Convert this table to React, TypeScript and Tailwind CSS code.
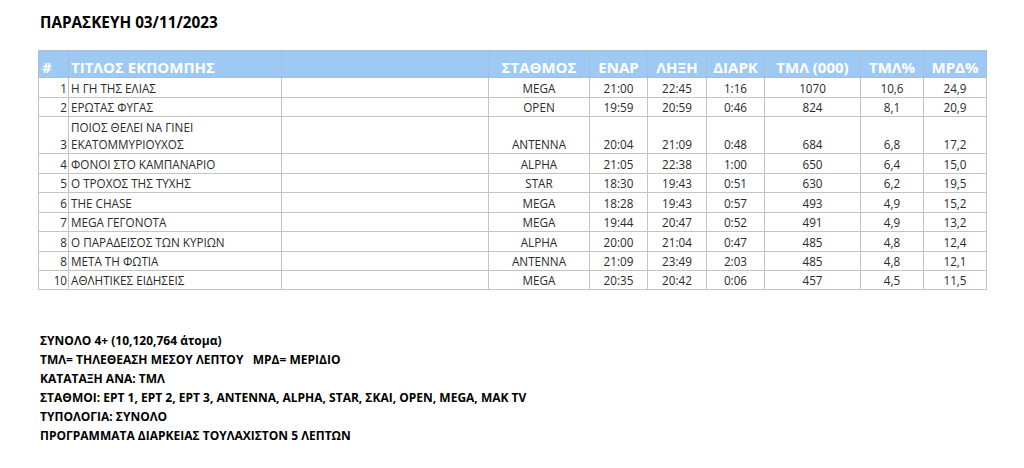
import React from "react";

const rows: [string, string, string, string, string, string, string, string, string][] = [
  ["1", "Η ΓΗ ΤΗΣ ΕΛΙΑΣ", "MEGA", "21:00", "22:45", "1:16", "1070", "10,6", "24,9"],
  ["2", "ΕΡΩΤΑΣ ΦΥΓΑΣ", "OPEN", "19:59", "20:59", "0:46", "824", "8,1", "20,9"],
  ["3", "ΠΟΙΟΣ ΘΕΛΕΙ ΝΑ ΓΙΝΕΙ ΕΚΑΤΟΜΜΥΡΙΟΥΧΟΣ", "ANTENNA", "20:04", "21:09", "0:48", "684", "6,8", "17,2"],
  ["4", "ΦΟΝΟΙ ΣΤΟ ΚΑΜΠΑΝΑΡΙΟ", "ALPHA", "21:05", "22:38", "1:00", "650", "6,4", "15,0"],
  ["5", "Ο ΤΡΟΧΟΣ ΤΗΣ ΤΥΧΗΣ", "STAR", "18:30", "19:43", "0:51", "630", "6,2", "19,5"],
  ["6", "THE CHASE", "MEGA", "18:28", "19:43", "0:57", "493", "4,9", "15,2"],
  ["7", "MEGA ΓΕΓΟΝΟΤΑ", "MEGA", "19:44", "20:47", "0:52", "491", "4,9", "13,2"],
  ["8", "Ο ΠΑΡΑΔΕΙΣΟΣ ΤΩΝ ΚΥΡΙΩΝ", "ALPHA", "20:00", "21:04", "0:47", "485", "4,8", "12,4"],
  ["8", "ΜΕΤΑ ΤΗ ΦΩΤΙΑ", "ANTENNA", "21:09", "23:49", "2:03", "485", "4,8", "12,1"],
  ["10", "ΑΘΛΗΤΙΚΕΣ ΕΙΔΗΣΕΙΣ", "MEGA", "20:35", "20:42", "0:06", "457", "4,5", "11,5"],
];

const heights = [20, 19, 37, 20, 19, 20, 19, 20, 19, 19];

const footer = [
  "ΣΥΝΟΛΟ 4+ (10,120,764 άτομα)",
  "ΤΜΛ= ΤΗΛΕΘΕΑΣΗ ΜΕΣΟΥ ΛΕΠΤΟΥ\u00a0\u00a0\u00a0ΜΡΔ= ΜΕΡΙΔΙΟ",
  "ΚΑΤΑΤΑΞΗ ΑΝΑ: ΤΜΛ",
  "ΣΤΑΘΜΟΙ: ΕΡΤ 1, ΕΡΤ 2, ΕΡΤ 3, ANTENNA, ALPHA, STAR, ΣΚΑΙ, OPEN, MEGA, ΜΑΚ TV",
  "ΤΥΠΟΛΟΓΙΑ: ΣΥΝΟΛΟ",
  "ΠΡΟΓΡΑΜΜΑΤΑ ΔΙΑΡΚΕΙΑΣ ΤΟΥΛΑΧΙΣΤΟΝ 5 ΛΕΠΤΩΝ",
];

export default function App() {
  const td = "border border-[#c4c4c4] px-[3px] align-bottom leading-[17px] whitespace-nowrap";
  const th = "border border-[#b0bccb] px-[3px] align-bottom pb-[0px] text-white font-bold text-[15px] leading-[20px] whitespace-nowrap";
  return (
    <div
      className="w-[1024px] h-[468px] bg-white text-[#2a2a2a] overflow-hidden"
      style={{ fontFamily: '"Open Sans", "Noto Sans", sans-serif' }}
    >
      <div className="pl-[40px] pt-[12px] text-[15.3px] font-bold text-black leading-[20px]">
        ΠΑΡΑΣΚΕΥΗ 03/11/2023
      </div>
      <table className="ml-[38px] mt-[18px] border-collapse table-fixed w-[948px] text-[11.7px]">
        <colgroup>
          <col className="w-[30px]" />
          <col className="w-[213px]" />
          <col className="w-[207px]" />
          <col className="w-[101px]" />
          <col className="w-[58px]" />
          <col className="w-[59px]" />
          <col className="w-[58px]" />
          <col className="w-[96px]" />
          <col className="w-[63px]" />
          <col className="w-[63px]" />
        </colgroup>
        <thead>
          <tr className="h-[27px] bg-[#9ccaf4]">
            <th className={`${th} text-left`}>#</th>
            <th className={`${th} text-left pl-[2px]`}>ΤΙΤΛΟΣ ΕΚΠΟΜΠΗΣ</th>
            <th className={th}></th>
            <th className={`${th} text-center`}>ΣΤΑΘΜΟΣ</th>
            <th className={`${th} text-center`}>ΕΝΑΡ</th>
            <th className={`${th} text-center`}>ΛΗΞΗ</th>
            <th className={`${th} text-center`}>ΔΙΑΡΚ</th>
            <th className={`${th} text-center`}>ΤΜΛ (000)</th>
            <th className={`${th} text-center`}>ΤΜΛ%</th>
            <th className={`${th} text-center`}>ΜΡΔ%</th>
          </tr>
        </thead>
        <tbody>
          {rows.map((r, i) => (
            <tr key={i} style={{ height: heights[i] }}>
              <td className={`${td} text-right pr-[1px]`}>{r[0]}</td>
              <td className={`${td} text-left pl-[2px]`}>
                {i === 2 ? (
                  <>
                    ΠΟΙΟΣ ΘΕΛΕΙ ΝΑ ΓΙΝΕΙ
                    <br />
                    ΕΚΑΤΟΜΜΥΡΙΟΥΧΟΣ
                  </>
                ) : (
                  r[1]
                )}
              </td>
              <td className={td}></td>
              <td className={`${td} text-center`}>{r[2]}</td>
              <td className={`${td} text-center`}>{r[3]}</td>
              <td className={`${td} text-center`}>{r[4]}</td>
              <td className={`${td} text-center`}>{r[5]}</td>
              <td className={`${td} text-center`}>{r[6]}</td>
              <td className={`${td} text-center`}>{r[7]}</td>
              <td className={`${td} text-center`}>{r[8]}</td>
            </tr>
          ))}
        </tbody>
      </table>
      <div className="pl-[40px] pt-[41px] flex flex-col text-[12px] font-bold text-black">
        {footer.map((f, i) => (
          <div key={i} className="h-[19px] leading-[19px] whitespace-pre">
            {f}
          </div>
        ))}
      </div>
    </div>
  );
}
